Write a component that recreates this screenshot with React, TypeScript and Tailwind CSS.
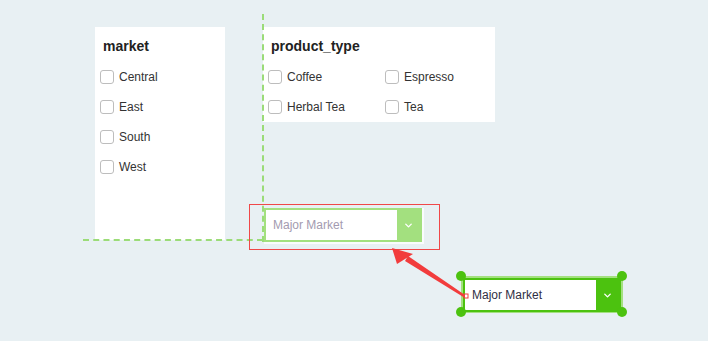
import { ChevronDown } from "lucide-react";

const markets = ["Central", "East", "South", "West"];
const productTypes = ["Coffee", "Espresso", "Herbal Tea", "Tea"];

const CheckItem = ({ label }: { label: string }) => (
  <label className="flex items-center h-[30px] cursor-pointer">
    <span className="w-[14px] h-[14px] border border-[#bdbdbd] rounded-[3px] bg-white shrink-0" />
    <span className="ml-[5px] text-[12px] text-[#333333]">{label}</span>
  </label>
);

const Dropdown = ({ ghost }: { ghost?: boolean }) => (
  <div
    className={`flex h-full w-full bg-white border-2 ${ghost ? "border-[#a3e07f]" : "border-[#4cc20f]"}`}
  >
    <div
      className={`flex-1 flex items-center pl-[7px] text-[12px] ${ghost ? "text-[#a39bb0]" : "text-[#2f2f45]"}`}
    >
      Major Market
    </div>
    <div
      className={`w-[23px] flex items-center justify-center ${ghost ? "bg-[#a3e07f]" : "bg-[#4cc20f]"}`}
    >
      <ChevronDown size={11} strokeWidth={3} className="text-white" />
    </div>
  </div>
);

export default function App() {
  return (
    <div
      className="relative w-[708px] h-[341px] overflow-hidden bg-[#e8f0f3]"
      style={{ fontFamily: '"Liberation Sans", Arial, sans-serif' }}
    >
      {/* filter widgets on the canvas */}
      <div className="flex items-start gap-[38px] pl-[95px] pt-[27px]">
        <div className="w-[130px] h-[213px] bg-white px-[5px] pt-[9px]">
          <h3 className="pl-[3px] text-[14px] font-bold text-[#222222] leading-[20px]">market</h3>
          <div className="mt-[6px]">
            {markets.map((m) => (
              <CheckItem key={m} label={m} />
            ))}
          </div>
        </div>

        <div className="w-[232px] h-[95px] bg-white px-[5px] pt-[9px]">
          <h3 className="pl-[3px] text-[14px] font-bold text-[#222222] leading-[20px]">product_type</h3>
          <div className="mt-[6px] grid grid-cols-[117px_1fr]">
            {productTypes.map((p) => (
              <CheckItem key={p} label={p} />
            ))}
          </div>
        </div>
      </div>

      {/* alignment guides */}
      <div className="absolute left-[262px] top-[14px] h-[228px] border-l-2 border-dashed border-[#9bdc78]" />
      <div className="absolute left-[83px] top-[239px] w-[180px] border-t-2 border-dashed border-[#9bdc78]" />

      {/* drop target */}
      <div className="absolute left-[249px] top-[204px] w-[191px] h-[46px] border border-[#f04848]" />
      <div className="absolute left-[264px] top-[208px] w-[160px] h-[36px] bg-white/80" />
      <div className="absolute left-[264px] top-[208px] w-[158px] h-[34px]">
        <Dropdown ghost />
      </div>

      {/* dragged widget */}
      <div className="absolute left-[461px] top-[276px] w-[162px] h-[37px] border-2 border-[#a3e07f]" />
      <div className="absolute left-[463px] top-[278px] w-[158px] h-[34px]">
        <Dropdown />
      </div>
      <span className="absolute left-[456px] top-[271px] w-[10px] h-[10px] rounded-full bg-[#4cc20f]" />
      <span className="absolute left-[617px] top-[271px] w-[10px] h-[10px] rounded-full bg-[#4cc20f]" />
      <span className="absolute left-[456px] top-[307px] w-[10px] h-[10px] rounded-full bg-[#4cc20f]" />
      <span className="absolute left-[617px] top-[307px] w-[10px] h-[10px] rounded-full bg-[#4cc20f]" />

      {/* arrow */}
      <svg className="absolute left-0 top-0" width="708" height="341">
        <polygon points="465,295 465,298 405,261 408,256" fill="#f23c3c" />
        <polygon points="392,248 413,254 397,264" fill="#f23c3c" />
        <rect x="464" y="294" width="4" height="4" fill="none" stroke="#f23c3c" strokeWidth="1" />
      </svg>
    </div>
  );
}
